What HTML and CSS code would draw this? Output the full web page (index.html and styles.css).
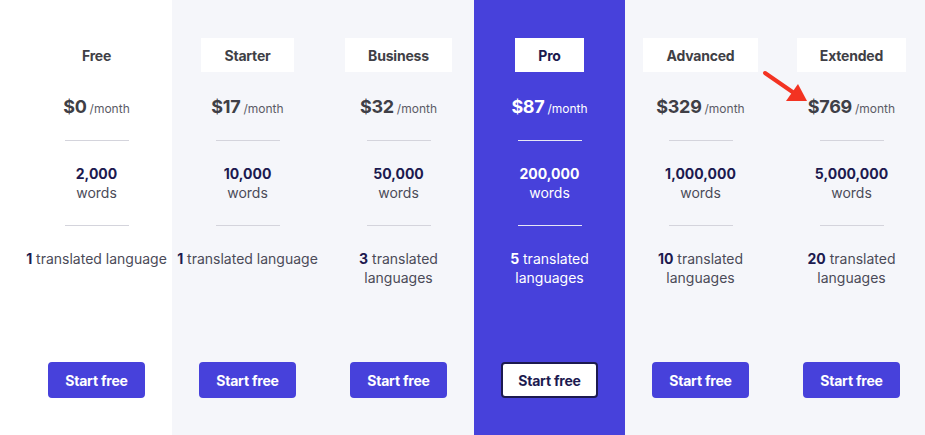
FILE: index.html
```html
<!DOCTYPE html>
<html lang="en">
<head>
<meta charset="utf-8">
<title>Pricing</title>
<link rel="stylesheet" href="styles.css">
</head>
<body>
<div class="page">
  <div class="plans">
    <div class="plan plan--free">
      <div class="plan__name">Free</div>
      <div class="plan__price"><span class="amount">$0</span><span class="per">/month</span></div>
      <div class="divider"></div>
      <div class="plan__words"><strong>2,000</strong><span>words</span></div>
      <div class="divider"></div>
      <div class="plan__langs"><strong>1</strong> translated language</div>
      <button class="btn">Start free</button>
    </div>
    <div class="plan">
      <div class="plan__name">Starter</div>
      <div class="plan__price"><span class="amount">$17</span><span class="per">/month</span></div>
      <div class="divider"></div>
      <div class="plan__words"><strong>10,000</strong><span>words</span></div>
      <div class="divider"></div>
      <div class="plan__langs"><strong>1</strong> translated language</div>
      <button class="btn">Start free</button>
    </div>
    <div class="plan">
      <div class="plan__name">Business</div>
      <div class="plan__price"><span class="amount">$32</span><span class="per">/month</span></div>
      <div class="divider"></div>
      <div class="plan__words"><strong>50,000</strong><span>words</span></div>
      <div class="divider"></div>
      <div class="plan__langs"><strong>3</strong> translated<br>languages</div>
      <button class="btn">Start free</button>
    </div>
    <div class="plan plan--featured">
      <div class="plan__name">Pro</div>
      <div class="plan__price"><span class="amount">$87</span><span class="per">/month</span></div>
      <div class="divider"></div>
      <div class="plan__words"><strong>200,000</strong><span>words</span></div>
      <div class="divider"></div>
      <div class="plan__langs"><strong>5</strong> translated<br>languages</div>
      <button class="btn">Start free</button>
    </div>
    <div class="plan">
      <div class="plan__name">Advanced</div>
      <div class="plan__price"><span class="amount">$329</span><span class="per">/month</span></div>
      <div class="divider"></div>
      <div class="plan__words"><strong>1,000,000</strong><span>words</span></div>
      <div class="divider"></div>
      <div class="plan__langs"><strong>10</strong> translated<br>languages</div>
      <button class="btn">Start free</button>
    </div>
    <div class="plan plan--marked">
      <div class="plan__name">Extended</div>
      <div class="plan__price"><span class="amount">$769</span><span class="per">/month</span></div>
      <div class="divider"></div>
      <div class="plan__words"><strong>5,000,000</strong><span>words</span></div>
      <div class="divider"></div>
      <div class="plan__langs"><strong>20</strong> translated<br>languages</div>
      <button class="btn">Start free</button>
      <svg class="arrow" width="48" height="36" viewBox="0 0 48 36" aria-hidden="true">
        <line x1="3" y1="3" x2="32" y2="23" stroke="#f33322" stroke-width="4" stroke-linecap="round"/>
        <polygon points="45,31 24,31 36,14" fill="#f33322"/>
      </svg>
    </div>
  </div>
</div>
</body>
</html>
```

FILE: styles.css
```css
* { box-sizing: border-box; }

html, body {
  margin: 0;
  padding: 0;
  background: #ffffff;
}

body {
  font-family: Inter, "Noto Sans", "Liberation Sans", sans-serif;
  color: #3f3f46;
  width: 925px;
  height: 435px;
  overflow: hidden;
}

.page {
  padding-left: 21px;
  height: 435px;
}

.plans {
  display: flex;
  height: 435px;
  width: 906px;
}

.plan {
  position: relative;
  flex: 0 0 151px;
  display: flex;
  flex-direction: column;
  align-items: center;
  padding-top: 38px;
  padding-bottom: 37px;
  background: #f5f6fa;
  text-align: center;
}

.plan--free {
  background: #ffffff;
}

.plan__name {
  height: 34px;
  line-height: 35px;
  padding: 0 23px;
  background: #ffffff;
  font-size: 14px;
  font-weight: 700;
  letter-spacing: -0.2px;
  color: #3f3f46;
}

.plan__price {
  height: 68px;
  display: flex;
  align-items: center;
  justify-content: center;
  gap: 3px;
  color: #3f3f46;
}

.amount {
  font-size: 18px;
  font-weight: 700;
  letter-spacing: -0.3px;
}

.per {
  font-size: 12px;
  color: #5b5b66;
  padding-top: 4px;
}

.divider {
  width: 64px;
  height: 1px;
  background: #d4d4dc;
}

.plan__words {
  height: 84px;
  display: flex;
  flex-direction: column;
  justify-content: center;
  font-size: 14px;
  line-height: 19px;
  color: #4b4b58;
}

.plan__words strong {
  font-weight: 700;
  color: #1c1a4f;
}

.plan__langs {
  padding-top: 23px;
  font-size: 14px;
  line-height: 19px;
  color: #4b4b58;
  white-space: nowrap;
}

.plan__langs strong {
  font-weight: 700;
  color: #1c1a4f;
}

.btn {
  margin-top: auto;
  width: 97px;
  height: 36px;
  border: 2px solid #4741db;
  border-radius: 4px;
  background: #4741db;
  color: #ffffff;
  font-family: inherit;
  font-size: 14px;
  font-weight: 700;
  letter-spacing: -0.2px;
  cursor: pointer;
}

/* Featured (Pro) column */
.plan--featured {
  background: #4741db;
}

.plan--featured .plan__name {
  color: #1c1a4f;
}

.plan--featured .plan__price,
.plan--featured .per,
.plan--featured .plan__words,
.plan--featured .plan__words strong,
.plan--featured .plan__langs,
.plan--featured .plan__langs strong {
  color: #ffffff;
}

.plan--featured .divider {
  background: #e6e6f5;
}

.plan--featured .btn {
  background: #ffffff;
  border-color: #1c1a4f;
  color: #1c1a4f;
}

.arrow {
  position: absolute;
  left: -14px;
  top: 70px;
}
```
